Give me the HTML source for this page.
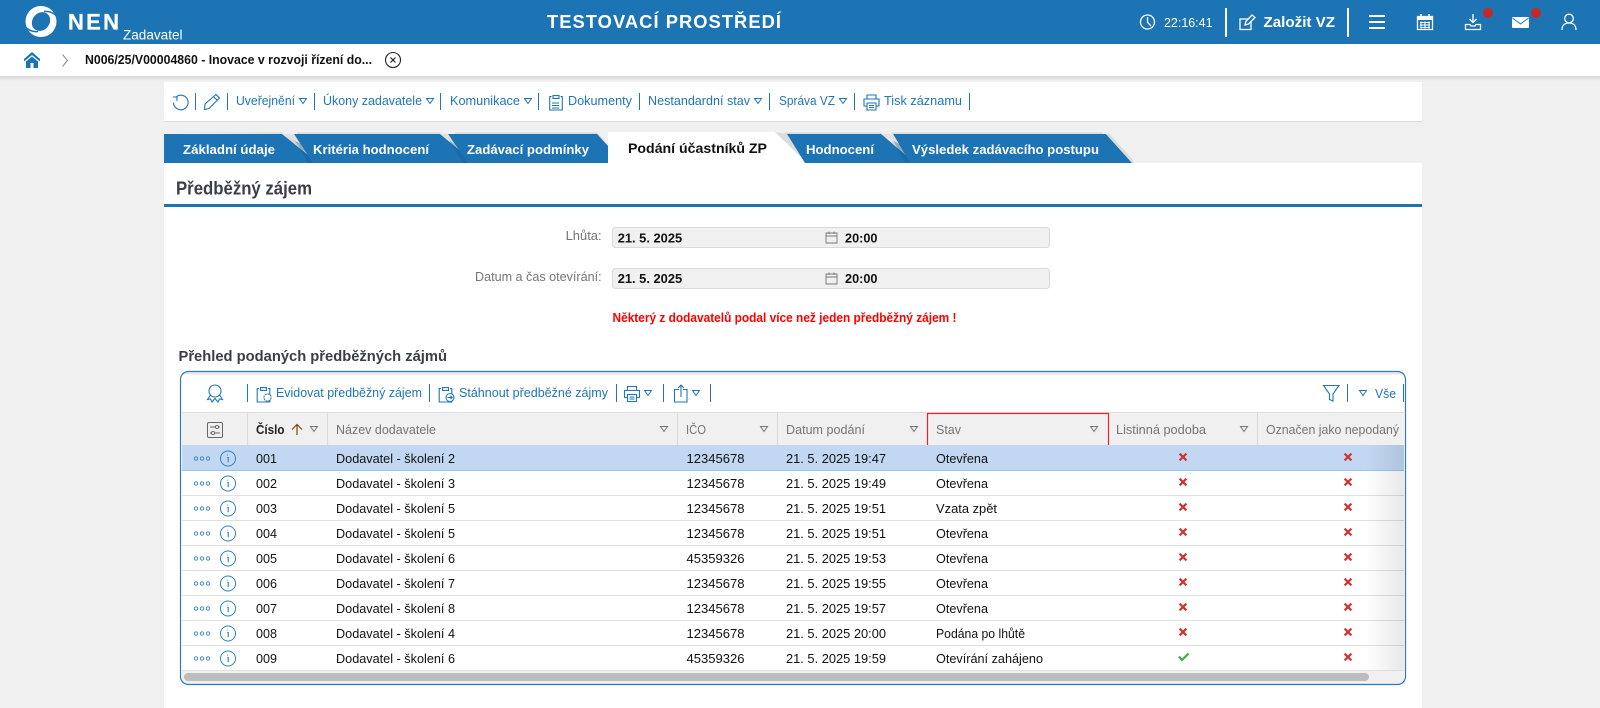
<!DOCTYPE html>
<html lang="cs">
<head>
<meta charset="utf-8">
<title>NEN Zadavatel</title>
<style>
html,body{margin:0;padding:0;width:1600px;height:708px;overflow:hidden;background:#f0f0f0}
svg{display:block;position:absolute;left:0;top:0}
text{font-family:"Liberation Sans",sans-serif;white-space:pre}
.b{font-weight:700}
.l{fill:#2176b4;font-size:13px}
.r{fill:#111;font-size:13px}
.h{fill:#757575;font-size:13px}
.w{fill:#fff;font-weight:700;font-size:13px}
.ic{fill:none;stroke:#2176b4;stroke-width:1.1}
.iw{fill:none;stroke:#fff;stroke-width:1.3}
.sep{stroke:#2176b4;stroke-width:1}
</style>
</head>
<body>
<svg width="1600" height="708" viewBox="0 0 1600 708" xmlns="http://www.w3.org/2000/svg">
<defs>
<linearGradient id="sh" x1="0" y1="0" x2="0" y2="1"><stop offset="0" stop-color="#d8d8d8"/><stop offset="1" stop-color="#f0f0f0"/></linearGradient>
<linearGradient id="fade" x1="0" y1="0" x2="1" y2="0"><stop offset="0" stop-color="#000" stop-opacity="0"/><stop offset="1" stop-color="#000" stop-opacity=".09"/></linearGradient>
<path id="tb" d="M-3.5 -2.5H3.5L0 2.5Z" fill="none" stroke="#2176b4" stroke-width="1"/>
<path id="tg" d="M-3.5 -2.5H3.5L0 2.5Z" fill="none" stroke="#777" stroke-width="1"/>
<path id="xx" d="M-3.4 -3.4L3.4 3.4M3.4 -3.4L-3.4 3.4" fill="none" stroke="#d32f2f" stroke-width="2.2"/>
<g id="ri">
<circle cx="196" cy="0" r="1.7" fill="none" stroke="#2f82be" stroke-width=".9"/>
<circle cx="202" cy="0" r="1.7" fill="none" stroke="#2f82be" stroke-width=".9"/>
<circle cx="208" cy="0" r="1.7" fill="none" stroke="#2f82be" stroke-width=".9"/>
<circle cx="228" cy="0" r="7.5" fill="none" stroke="#2f82be" stroke-width="1"/>
<path d="M227.6 -3.8V-3M227.2 -1H228.2V3.8" fill="none" stroke="#2f82be" stroke-width="1.1"/>
</g>
<g id="clip">
<path d="M2.5 2.5H0.7V16H13.3V2.5H11.5M4 1.6H10V4.4H4Z" class="ic"/>
</g>
<g id="print">
<path d="M4 5V1H13V5M3.5 12H1V5H16V12H13.5M4 9H13V16H4ZM6 11.5H11M6 13.5H11" class="ic"/>
</g>
</defs>

<!-- page -->
<rect width="1600" height="708" fill="#f0f0f0"/>

<!-- header -->
<rect width="1600" height="44" fill="#1d74b4"/>
<circle cx="41" cy="21.5" r="15.5" fill="#fff"/>
<ellipse cx="41" cy="21.5" rx="8.5" ry="10" transform="rotate(40 41 21.5)" fill="#1d74b4"/>
<path d="M44 11.5Q52 10.5 57.5 17" fill="none" stroke="#1d74b4" stroke-width="1.6"/>
<path d="M38 31.5Q30 32.5 24.5 26" fill="none" stroke="#1d74b4" stroke-width="1.6"/>
<text class="b" x="68" y="29.5" font-size="22" fill="#fff" stroke="#fff" stroke-width=".3" textLength="51" lengthAdjust="spacing">NEN</text>
<text x="123" y="39.5" font-size="14" fill="#fff" textLength="59.5" lengthAdjust="spacingAndGlyphs">Zadavatel</text>
<text class="b" x="547" y="28" font-size="18" fill="#fff" textLength="235" lengthAdjust="spacingAndGlyphs" letter-spacing="1">TESTOVACÍ PROSTŘEDÍ</text>

<circle cx="1147.5" cy="22" r="7" class="iw"/>
<path d="M1147.5 17V22.3L1151 26" class="iw"/>
<text x="1164" y="27" font-size="13" fill="#fff" textLength="48.5" lengthAdjust="spacingAndGlyphs">22:16:41</text>
<rect x="1225" y="8" width="2" height="29" fill="#fff"/>
<path d="M1251 21V29.5H1240V19H1248" class="iw"/>
<path d="M1245 25L1245.8 21.5L1252 15L1255 17.5L1248.5 24Z" class="iw" stroke-width="1.1"/>
<text class="b" x="1263.5" y="27" font-size="15" fill="#fff" textLength="71.5" lengthAdjust="spacingAndGlyphs">Založit VZ</text>
<rect x="1347" y="8" width="2" height="29" fill="#fff"/>
<path d="M1369 16H1385M1369 22H1385M1369 28H1385" stroke="#fff" stroke-width="2" fill="none"/>
<path d="M1417.5 16.5H1432.5V29.5H1417.5Z" fill="#1d74b4" stroke="#fff" stroke-width="1.3"/>
<rect x="1417" y="16" width="16" height="4" fill="#fff"/>
<path d="M1421 14V17M1429 14V17" stroke="#fff" stroke-width="1.6"/>
<path d="M1420 22.5H1430M1420 25H1430M1420 27.5H1430M1421 21.5V28.5M1425 21.5V28.5M1429 21.5V28.5" stroke="#fff" stroke-width="1.1" fill="none"/>
<path d="M1473 14V22M1469.5 19L1473 22.5L1476.5 19" class="iw"/>
<path d="M1465.5 24.5H1470L1471 26H1475L1476 24.5H1480.5V29.5H1465.5Z" class="iw"/>
<circle cx="1488" cy="13" r="5" fill="#c62828"/>
<rect x="1512" y="17" width="17" height="11" rx="1" fill="#fff"/>
<path d="M1512.5 18L1520.5 24L1528.5 18" stroke="#1d74b4" stroke-width="1" fill="none"/>
<circle cx="1536" cy="13" r="5" fill="#c62828"/>
<circle cx="1569" cy="18.5" r="4.3" class="iw"/>
<path d="M1562 30C1562 25 1565 23 1569 23C1573 23 1576 25 1576 30" class="iw"/>

<!-- breadcrumb bar -->
<rect y="44" width="1600" height="32" fill="#fff"/>
<rect y="76" width="1600" height="5" fill="url(#sh)"/>
<path d="M32 52L24 59V61.5L32 55L40 61.5V59Z" fill="#1d74b4"/>
<path d="M32 56.5L26 61.5V68H30.5V63H33.5V68H38V61.5Z" fill="#1d74b4"/>
<path d="M62.5 54.5L67.5 60.5L62.5 66.5" fill="none" stroke="#8a8a8a" stroke-width="1"/>
<text class="b" x="85" y="64" font-size="12.5" fill="#111" textLength="287" lengthAdjust="spacingAndGlyphs">N006/25/V00004860 - Inovace v rozvoji řízení do...</text>
<circle cx="393" cy="60" r="7.5" fill="none" stroke="#222" stroke-width="1.1"/>
<path d="M390.5 57.5L395.5 62.5M395.5 57.5L390.5 62.5" stroke="#222" stroke-width="1.2"/>

<!-- action toolbar -->
<rect x="164" y="82" width="1258" height="39" fill="#fff"/>
<rect x="164" y="121" width="1258" height="1" fill="#dcdcdc"/>
<path d="M176 97A7.3 7.3 0 1 1 173.5 102.5M173 97H177V101" class="ic"/>
<path d="M195.5 93V110M227.5 93V110M314.5 93V110M440.5 93V110M538.5 93V110M639.5 93V110M769.5 93V110M854.5 93V110M969.5 93V110" class="sep" fill="none"/>
<path d="M205 104L216 94.5L219.5 98L209 108.5L204.5 109.5ZM213.5 96.5L217.5 100.5" class="ic"/>
<text class="l" x="236" y="105" textLength="59" lengthAdjust="spacingAndGlyphs">Uveřejnění</text>
<use href="#tb" x="303" y="101"/>
<text class="l" x="323" y="105" textLength="99" lengthAdjust="spacingAndGlyphs">Úkony zadavatele</text>
<use href="#tb" x="430" y="101"/>
<text class="l" x="450" y="105" textLength="70" lengthAdjust="spacingAndGlyphs">Komunikace</text>
<use href="#tb" x="528" y="101"/>
<use href="#clip" x="549" y="94"/>
<path d="M552 103H559M552 105.5H559M552 108H559" class="ic" stroke-width=".9"/>
<text class="l" x="568" y="105" textLength="64" lengthAdjust="spacingAndGlyphs">Dokumenty</text>
<text class="l" x="648" y="105" textLength="102" lengthAdjust="spacingAndGlyphs">Nestandardní stav</text>
<use href="#tb" x="758" y="101"/>
<text class="l" x="779" y="105" textLength="56" lengthAdjust="spacingAndGlyphs">Správa VZ</text>
<use href="#tb" x="843" y="101"/>
<use href="#print" x="863" y="94"/>
<text class="l" x="884" y="105" textLength="78" lengthAdjust="spacingAndGlyphs">Tisk záznamu</text>

<!-- tabs -->
<rect x="164" y="163" width="1258" height="545" fill="#fff"/>
<path d="M170 132.5H282L298 150V134H294Z" fill="#d8d8d8"/>
<path d="M297 132.5H440L455 150H300Z" fill="#d8d8d8"/>
<path d="M455 132.5H597L612 150H458Z" fill="#d8d8d8"/>
<path d="M785 132.5H881L897 150H790Z" fill="#d8d8d8"/>
<path d="M892 132.5H1102L1134 163H892Z" fill="#d8d8d8"/>

<path d="M164 134H282L318 163H164Z" fill="#1d74b4"/>
<path d="M294 134H440L475 163H313Z" fill="#1d74b4"/>
<path d="M291 134H294L313 163H308Z" fill="#155a8c" opacity=".35"/>
<path d="M282 134H294L300 143.5Z" fill="#e2e2e2"/>
<path d="M448 134H597L608 146V163H468Z" fill="#1d74b4"/>
<path d="M445 134H448L468 163H463Z" fill="#155a8c" opacity=".35"/>
<path d="M440 134H448L454 143.5Z" fill="#e2e2e2"/>
<path d="M608 132H775L807 163H608Z" fill="#fff"/>
<path d="M775 132L787 134L805 163H807Z" fill="#dcdcdc"/>
<path d="M787 134H881L915 163H805Z" fill="#1d74b4"/>
<path d="M893 134H1106L1132 163H910Z" fill="#1d74b4"/>
<path d="M890 134H893L910 163H905Z" fill="#155a8c" opacity=".35"/>
<path d="M881 134H893L899 144Z" fill="#e2e2e2"/>
<path d="M1106 134L1109 133.5L1133 160V163H1132Z" fill="#dcdcdc"/>

<text class="w" x="183" y="154" textLength="92" lengthAdjust="spacingAndGlyphs">Základní údaje</text>
<text class="w" x="313" y="154" textLength="116" lengthAdjust="spacingAndGlyphs">Kritéria hodnocení</text>
<text class="w" x="467" y="154" textLength="122" lengthAdjust="spacingAndGlyphs">Zadávací podmínky</text>
<text class="b" x="628" y="153" font-size="14" fill="#111" textLength="139" lengthAdjust="spacingAndGlyphs">Podání účastníků ZP</text>
<text class="w" x="806" y="154" textLength="68" lengthAdjust="spacingAndGlyphs">Hodnocení</text>
<text class="w" x="912" y="154" textLength="187" lengthAdjust="spacingAndGlyphs">Výsledek zadávacího postupu</text>

<!-- section title -->
<text class="b" x="176" y="194.5" font-size="18" fill="#3a3f47" textLength="136" lengthAdjust="spacingAndGlyphs">Předběžný zájem</text>
<rect x="164" y="204" width="1258" height="3" fill="#1d74b4"/>

<!-- form -->
<text class="h" x="565.6" y="240" textLength="36" lengthAdjust="spacingAndGlyphs">Lhůta:</text>
<text class="h" x="475" y="281" textLength="126.6" lengthAdjust="spacingAndGlyphs">Datum a čas otevírání:</text>
<rect x="612.5" y="227.5" width="437" height="20" rx="3" fill="#f0f0f0" stroke="#d9d9d9"/>
<rect x="612.5" y="268.5" width="437" height="20" rx="3" fill="#f0f0f0" stroke="#d9d9d9"/>
<text class="b" x="617.7" y="242.5" font-size="13" fill="#111" textLength="64.5" lengthAdjust="spacingAndGlyphs">21. 5. 2025</text>
<text class="b" x="845" y="242.5" font-size="13" fill="#111" textLength="32.5" lengthAdjust="spacingAndGlyphs">20:00</text>
<text class="b" x="617.7" y="283" font-size="13" fill="#111" textLength="64.5" lengthAdjust="spacingAndGlyphs">21. 5. 2025</text>
<text class="b" x="845" y="283" font-size="13" fill="#111" textLength="32.5" lengthAdjust="spacingAndGlyphs">20:00</text>
<path d="M826 233H837V243H826ZM826 236H837M829 231.5V234M834 231.5V234" fill="none" stroke="#777" stroke-width=".9"/>
<path d="M826 274H837V284H826ZM826 277H837M829 272.5V275M834 272.5V275" fill="none" stroke="#777" stroke-width=".9"/>
<text class="b" x="612.5" y="322" font-size="12.5" fill="#f00" textLength="344" lengthAdjust="spacingAndGlyphs">Některý z dodavatelů podal více než jeden předběžný zájem !</text>

<!-- grid heading -->
<text class="b" x="178.5" y="361" font-size="14.5" fill="#3a3f47" textLength="268.5" lengthAdjust="spacingAndGlyphs">Přehled podaných předběžných zájmů</text>

<!-- grid frame -->
<rect x="180.5" y="371.5" width="1225" height="313" rx="8" fill="#fff"/>
<rect x="182" y="372.5" width="1222" height="2" fill="#e6e6e6"/>

<!-- grid toolbar -->
<circle cx="215" cy="391" r="6" class="ic"/>
<path d="M210.5 395L207.5 399.5L210.5 399L212 402L215 398.5L218 402L219.5 399L222.5 399.5L219.5 395" class="ic"/>
<path d="M247.5 384V402M429.5 384V402M616.5 384V402M663.5 384V402M710.5 384V402M1347.5 384V402M1403.5 384V402" class="sep" fill="none"/>
<use href="#clip" x="256.5" y="386"/>
<circle cx="267.5" cy="397.5" r="3.6" fill="#fff" stroke="#2176b4" stroke-width="1.1" stroke-dasharray="2 .8"/>
<text class="l" x="276" y="397" textLength="146" lengthAdjust="spacingAndGlyphs">Evidovat předběžný zájem</text>
<use href="#clip" x="438.5" y="386"/>
<circle cx="450" cy="397.5" r="4" fill="#fff" stroke="#2176b4" stroke-width="1.1"/>
<path d="M447.5 397.5H452M450.5 395.8L452.3 397.5L450.5 399.2" class="ic" stroke-width=".9"/>
<text class="l" x="459" y="397" textLength="149" lengthAdjust="spacingAndGlyphs">Stáhnout předběžné zájmy</text>
<use href="#print" x="623.5" y="385.5"/>
<use href="#tb" x="648" y="393"/>
<path d="M679 389.5H674.5V402H687V389.5H683M681 397V385M678 388L681 385L684 388" class="ic"/>
<use href="#tb" x="696" y="393"/>
<path d="M1323.5 385.5H1339L1333 394V401L1329.5 399.5V394Z" class="ic"/>
<use href="#tb" x="1363" y="393"/>
<text class="l" x="1375" y="398" textLength="21" lengthAdjust="spacingAndGlyphs">Vše</text>

<!-- grid header -->
<rect x="182" y="412" width="1222" height="33" fill="#f0f0f0"/>
<rect x="182" y="412" width="1222" height="1" fill="#dedede"/>
<path d="M247.5 412V445M327.5 412V445M677.5 412V445M777.5 412V445M1257.5 412V445" stroke="#dcdcdc" stroke-width="1.2" fill="none"/>
<rect x="207.5" y="422.5" width="15" height="15" rx="1.5" fill="none" stroke="#666"/>
<path d="M210 427H220M210 433H220" stroke="#666" stroke-width=".9"/>
<circle cx="217" cy="427" r="1.6" fill="#f0f0f0" stroke="#666" stroke-width=".9"/>
<circle cx="213" cy="433" r="1.6" fill="#f0f0f0" stroke="#666" stroke-width=".9"/>
<text class="b" x="256" y="434" font-size="13" fill="#222" textLength="28.5" lengthAdjust="spacingAndGlyphs">Číslo</text>
<path d="M297 435V424.5M292 429.5L297 424.5L302 429.5" fill="none" stroke="#7a4a10" stroke-width="1.2"/>
<use href="#tg" x="314" y="429"/>
<text class="h" x="336" y="434" textLength="100" lengthAdjust="spacingAndGlyphs">Název dodavatele</text>
<use href="#tg" x="664" y="429"/>
<text class="h" x="686" y="434" textLength="20" lengthAdjust="spacingAndGlyphs">IČO</text>
<use href="#tg" x="764" y="429"/>
<text class="h" x="786" y="434" textLength="79" lengthAdjust="spacingAndGlyphs">Datum podání</text>
<use href="#tg" x="914" y="429"/>
<rect x="927.5" y="413.5" width="181" height="33" fill="none" stroke="#e8212b" stroke-width="1.2"/>
<text class="h" x="936" y="434" textLength="25" lengthAdjust="spacingAndGlyphs">Stav</text>
<use href="#tg" x="1094" y="429"/>
<text class="h" x="1116" y="434" textLength="90" lengthAdjust="spacingAndGlyphs">Listinná podoba</text>
<use href="#tg" x="1244" y="429"/>
<text class="h" x="1266" y="434" textLength="133" lengthAdjust="spacingAndGlyphs">Označen jako nepodaný</text>

<!-- grid rows -->
<rect x="182" y="445" width="1222" height="25" fill="#c2d8f2"/>
<path d="M182 470.5H1404" stroke="#9cc3ef"/>
<path d="M182 495.5H1404M182 520.5H1404M182 545.5H1404M182 570.5H1404M182 595.5H1404M182 620.5H1404M182 645.5H1404M182 670.5H1404" stroke="#e0e0e0"/>

<g>
<use href="#ri" y="458.5"/>
<text class="r" x="256" y="463" textLength="21" lengthAdjust="spacingAndGlyphs">001</text>
<text class="r" x="336" y="463" textLength="119" lengthAdjust="spacingAndGlyphs">Dodavatel - školení 2</text>
<text class="r" x="686.5" y="463" textLength="58" lengthAdjust="spacingAndGlyphs">12345678</text>
<text class="r" x="786" y="463" textLength="100" lengthAdjust="spacingAndGlyphs">21. 5. 2025 19:47</text>
<text class="r" x="936" y="463" textLength="52" lengthAdjust="spacingAndGlyphs">Otevřena</text>
<use href="#xx" x="1183" y="457"/><use href="#xx" x="1348" y="457"/>
</g>
<g transform="translate(0,25)">
<use href="#ri" y="458.5"/>
<text class="r" x="256" y="463" textLength="21" lengthAdjust="spacingAndGlyphs">002</text>
<text class="r" x="336" y="463" textLength="119" lengthAdjust="spacingAndGlyphs">Dodavatel - školení 3</text>
<text class="r" x="686.5" y="463" textLength="58" lengthAdjust="spacingAndGlyphs">12345678</text>
<text class="r" x="786" y="463" textLength="100" lengthAdjust="spacingAndGlyphs">21. 5. 2025 19:49</text>
<text class="r" x="936" y="463" textLength="52" lengthAdjust="spacingAndGlyphs">Otevřena</text>
<use href="#xx" x="1183" y="457"/><use href="#xx" x="1348" y="457"/>
</g>
<g transform="translate(0,50)">
<use href="#ri" y="458.5"/>
<text class="r" x="256" y="463" textLength="21" lengthAdjust="spacingAndGlyphs">003</text>
<text class="r" x="336" y="463" textLength="119" lengthAdjust="spacingAndGlyphs">Dodavatel - školení 5</text>
<text class="r" x="686.5" y="463" textLength="58" lengthAdjust="spacingAndGlyphs">12345678</text>
<text class="r" x="786" y="463" textLength="100" lengthAdjust="spacingAndGlyphs">21. 5. 2025 19:51</text>
<text class="r" x="936" y="463" textLength="61" lengthAdjust="spacingAndGlyphs">Vzata zpět</text>
<use href="#xx" x="1183" y="457"/><use href="#xx" x="1348" y="457"/>
</g>
<g transform="translate(0,75)">
<use href="#ri" y="458.5"/>
<text class="r" x="256" y="463" textLength="21" lengthAdjust="spacingAndGlyphs">004</text>
<text class="r" x="336" y="463" textLength="119" lengthAdjust="spacingAndGlyphs">Dodavatel - školení 5</text>
<text class="r" x="686.5" y="463" textLength="58" lengthAdjust="spacingAndGlyphs">12345678</text>
<text class="r" x="786" y="463" textLength="100" lengthAdjust="spacingAndGlyphs">21. 5. 2025 19:51</text>
<text class="r" x="936" y="463" textLength="52" lengthAdjust="spacingAndGlyphs">Otevřena</text>
<use href="#xx" x="1183" y="457"/><use href="#xx" x="1348" y="457"/>
</g>
<g transform="translate(0,100)">
<use href="#ri" y="458.5"/>
<text class="r" x="256" y="463" textLength="21" lengthAdjust="spacingAndGlyphs">005</text>
<text class="r" x="336" y="463" textLength="119" lengthAdjust="spacingAndGlyphs">Dodavatel - školení 6</text>
<text class="r" x="686.5" y="463" textLength="58" lengthAdjust="spacingAndGlyphs">45359326</text>
<text class="r" x="786" y="463" textLength="100" lengthAdjust="spacingAndGlyphs">21. 5. 2025 19:53</text>
<text class="r" x="936" y="463" textLength="52" lengthAdjust="spacingAndGlyphs">Otevřena</text>
<use href="#xx" x="1183" y="457"/><use href="#xx" x="1348" y="457"/>
</g>
<g transform="translate(0,125)">
<use href="#ri" y="458.5"/>
<text class="r" x="256" y="463" textLength="21" lengthAdjust="spacingAndGlyphs">006</text>
<text class="r" x="336" y="463" textLength="119" lengthAdjust="spacingAndGlyphs">Dodavatel - školení 7</text>
<text class="r" x="686.5" y="463" textLength="58" lengthAdjust="spacingAndGlyphs">12345678</text>
<text class="r" x="786" y="463" textLength="100" lengthAdjust="spacingAndGlyphs">21. 5. 2025 19:55</text>
<text class="r" x="936" y="463" textLength="52" lengthAdjust="spacingAndGlyphs">Otevřena</text>
<use href="#xx" x="1183" y="457"/><use href="#xx" x="1348" y="457"/>
</g>
<g transform="translate(0,150)">
<use href="#ri" y="458.5"/>
<text class="r" x="256" y="463" textLength="21" lengthAdjust="spacingAndGlyphs">007</text>
<text class="r" x="336" y="463" textLength="119" lengthAdjust="spacingAndGlyphs">Dodavatel - školení 8</text>
<text class="r" x="686.5" y="463" textLength="58" lengthAdjust="spacingAndGlyphs">12345678</text>
<text class="r" x="786" y="463" textLength="100" lengthAdjust="spacingAndGlyphs">21. 5. 2025 19:57</text>
<text class="r" x="936" y="463" textLength="52" lengthAdjust="spacingAndGlyphs">Otevřena</text>
<use href="#xx" x="1183" y="457"/><use href="#xx" x="1348" y="457"/>
</g>
<g transform="translate(0,175)">
<use href="#ri" y="458.5"/>
<text class="r" x="256" y="463" textLength="21" lengthAdjust="spacingAndGlyphs">008</text>
<text class="r" x="336" y="463" textLength="119" lengthAdjust="spacingAndGlyphs">Dodavatel - školení 4</text>
<text class="r" x="686.5" y="463" textLength="58" lengthAdjust="spacingAndGlyphs">12345678</text>
<text class="r" x="786" y="463" textLength="100" lengthAdjust="spacingAndGlyphs">21. 5. 2025 20:00</text>
<text class="r" x="936" y="463" textLength="89" lengthAdjust="spacingAndGlyphs">Podána po lhůtě</text>
<use href="#xx" x="1183" y="457"/><use href="#xx" x="1348" y="457"/>
</g>
<g transform="translate(0,200)">
<use href="#ri" y="458.5"/>
<text class="r" x="256" y="463" textLength="21" lengthAdjust="spacingAndGlyphs">009</text>
<text class="r" x="336" y="463" textLength="119" lengthAdjust="spacingAndGlyphs">Dodavatel - školení 6</text>
<text class="r" x="686.5" y="463" textLength="58" lengthAdjust="spacingAndGlyphs">45359326</text>
<text class="r" x="786" y="463" textLength="100" lengthAdjust="spacingAndGlyphs">21. 5. 2025 19:59</text>
<text class="r" x="936" y="463" textLength="107" lengthAdjust="spacingAndGlyphs">Otevírání zahájeno</text>
<path d="M1179 456.5L1182 460L1188.5 453.5" fill="none" stroke="#3cb043" stroke-width="2.2"/>
<use href="#xx" x="1348" y="457"/>
</g>

<!-- right fade -->
<rect x="1365" y="445" width="39" height="225" fill="url(#fade)"/>

<!-- scrollbar -->
<rect x="182" y="671" width="1222" height="13" fill="#f0f0f0"/>
<rect x="184" y="673" width="1185" height="8" rx="4" fill="#bdbdbd"/>

<!-- grid border -->
<rect x="180.5" y="371.5" width="1225" height="313" rx="8" fill="none" stroke="#2b7ab8" stroke-width="1.2"/>
</svg>
</body>
</html>
